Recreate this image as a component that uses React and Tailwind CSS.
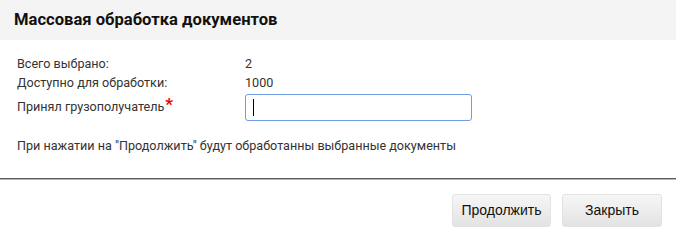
export default function App() {
  return (
    <div className="w-[676px] h-[238px] bg-white flex flex-col">
      <div className="h-[40px] bg-[#f4f4f4] flex items-center px-[14px]">
        <h1 className="font-['Roboto',sans-serif] font-bold text-[16.6px] text-[#111] pt-[1px]">
          Массовая обработка документов
        </h1>
      </div>
      <div className="flex flex-col font-['Roboto',sans-serif] text-[12.6px] text-[#333] pl-[17px] pt-[15px]">
        <div className="flex items-center h-[19px]">
          <div className="w-[228px]">Всего выбрано:</div>
          <div>2</div>
        </div>
        <div className="flex items-center h-[19px]">
          <div className="w-[228px]">Доступно для обработки:</div>
          <div>1000</div>
        </div>
        <div className="flex items-center mt-[1px] h-[27px]">
          <div className="w-[228px] flex items-start">
            <span>Принял грузополучатель</span>
            <span className="text-[#e00] text-[17px] leading-[10px] ml-[1px] mt-[1px] font-bold">*</span>
          </div>
          <div className="w-[227px] h-[27px] border border-[#6f9ee6] rounded-[3px] flex items-center pl-[7px]">
            <div className="w-[1px] h-[17px] bg-black"></div>
          </div>
        </div>
        <div className="mt-[18px] leading-[14px]">
          При нажатии на "Продолжить" будут обработанны выбранные документы
        </div>
      </div>
      <div className="mt-[25px] border-t border-[#5a5a5a] border-b-[1px] border-b-[#b8b8b8] h-[2px]"></div>
      <div className="flex justify-end gap-[11px] pr-[14px] pt-[14px]">
        <button className="w-[99px] h-[33px] rounded-[3px] border border-[#e2e2e2] bg-gradient-to-b from-[#f6f6f6] to-[#e3e3e3] font-['Liberation_Sans',sans-serif] text-[14px] text-[#111]">
          Продолжить
        </button>
        <button className="w-[100px] h-[33px] rounded-[3px] border border-[#e2e2e2] bg-gradient-to-b from-[#f6f6f6] to-[#e3e3e3] font-['Liberation_Sans',sans-serif] text-[14px] text-[#111]">
          Закрыть
        </button>
      </div>
    </div>
  );
}
